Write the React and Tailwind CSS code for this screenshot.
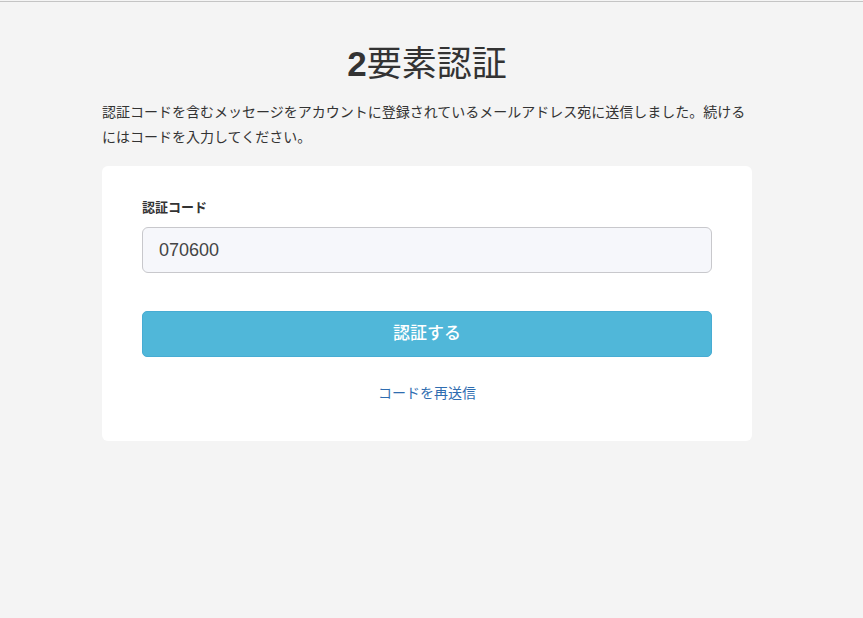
export default function App() {
  const font = { fontFamily: '"Liberation Sans", "Noto Sans CJK JP", sans-serif' };
  return (
    <div className="min-h-screen bg-[#f4f4f4] pt-px" style={font}>
      <div className="h-px bg-[#c4c4c4]" />
      <div className="ml-[102px] w-[650px] pt-[42px] pb-10 text-[#333]">
        <h1 className="text-center text-[35px] leading-[40px] font-normal">
          <span className="font-bold">2</span>要素認証
        </h1>
        <p className="mt-4 text-[14px] leading-[25px] text-[#333]">
          認証コードを含むメッセージをアカウントに登録されているメールアドレス宛に送信しました。続けるにはコードを入力してください。
        </p>
        <div className="mt-4 rounded-md bg-white px-10 pt-8 pb-[38px]">
          <label className="block text-[13px] leading-5 font-bold text-[#333]">認証コード</label>
          <div className="mt-[9px] flex h-[46px] items-center rounded-md border border-[#c8c8cc] bg-[#f6f7fb] px-4 text-[18px] text-[#444]">
            070600
          </div>
          <button className="mt-[38px] flex h-[46px] w-full items-center justify-center rounded-[5px] border border-[#47acd3] bg-[#50b7d9] text-[17px] font-medium text-white">
            認証する
          </button>
          <div className="mt-[26px] text-center text-[14px] leading-5 text-[#2f6db0]">コードを再送信</div>
        </div>
      </div>
    </div>
  );
}
